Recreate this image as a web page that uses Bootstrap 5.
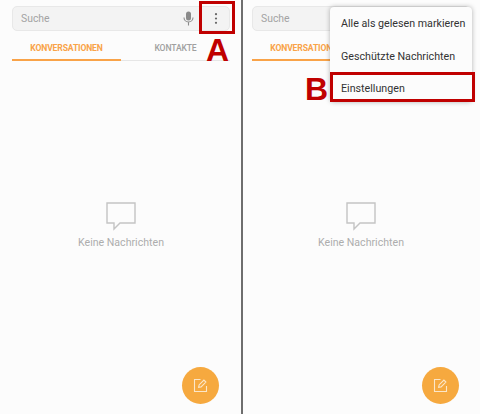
<!DOCTYPE html>
<html lang="de">
<head>
  <meta charset="UTF-8" />
  <title>Nachrichten</title>
  <link href="https://cdn.jsdelivr.net/npm/bootstrap@5.3.3/dist/css/bootstrap.min.css" rel="stylesheet">
  <style>
    html, body { width: 480px; height: 414px; overflow: hidden; }
    body { background: #fcfcfc; font-family: Roboto, "Liberation Sans", sans-serif; }
    .screen { width: 241px; height: 414px; padding: 6px 0 0 12px; position: relative; }
    .screen-b { width: 237px; padding-left: 9px; }
    .split { width: 2px; height: 414px; background: #6e6e6e; }
    .searchbar { width: 218px; height: 25px; background: #f3f3f3; border: 1px solid #e8e8e8; border-radius: 5px; padding: 0 11px 0 8px; color: #a3a3a3; font-size: 10.4px; }
    .mic-gap { gap: 20px; }
    .tabbar { width: 218px; height: 24px; margin-top: 6px; border-bottom: 1px solid #e6e6e6; font-size: 8.6px; font-weight: 700; }
    .tab-on { width: 109px; height: 24px; color: #f9a348; border-bottom: 2px solid #f9a348; text-align: center; line-height: 22px; letter-spacing: -.15px; }
    .tab-off { width: 109px; color: #a0a0a0; text-align: center; line-height: 22px; font-weight: 500; letter-spacing: -.15px; }
    .empty { margin-top: 141px; width: 218px; color: #adadad; font-size: 10.6px; }
    .empty svg { display: block; margin-bottom: 4px; }
    .fab { position: absolute; left: 182px; top: 367px; width: 37px; height: 37px; border-radius: 50%; background: #f6a93f; }
    .screen-b .fab { left: 179px; }
    .popmenu { position: absolute; left: 87px; top: 7px; width: 142px; height: 95px; padding-top: 1px; background: #fcfcfc; border-radius: 4px; box-shadow: 0 0 5px rgba(0,0,0,.3); color: #333; font-size: 10.7px; }
    .popmenu div { height: 32.5px; line-height: 32.5px; padding-left: 11px; white-space: nowrap; }
    .redbox { position: absolute; border: 3px solid #c00000; }
    .box-a { left: 199px; top: 1px; width: 36px; height: 33px; }
    .box-b { left: 87px; top: 72px; width: 145px; height: 30px; }
    .callout { position: absolute; color: #c00000; font-family: "Liberation Sans", sans-serif; font-weight: 700; font-size: 32px; line-height: 1; }
    .call-a { left: 206px; top: 34px; }
    .call-b { left: 62px; top: 73px; }
  </style>
</head>
<body class="d-flex">
  <div class="screen">
    <div class="searchbar d-flex align-items-center justify-content-between">
      <span>Suche</span>
      <span class="d-flex align-items-center mic-gap">
        <svg width="11" height="15" viewBox="0 0 11 15"><rect x="3" y="0.5" width="5" height="9" rx="2.5" fill="#8a8a8a"/><path d="M1 6.5a4.5 4.5 0 0 0 9 0M5.5 11v3.5" fill="none" stroke="#8a8a8a" stroke-width="1.1"/></svg>
        <svg width="4" height="11" viewBox="0 0 4 11"><circle cx="2" cy="1.2" r="1.1" fill="#666"/><circle cx="2" cy="5.5" r="1.1" fill="#666"/><circle cx="2" cy="9.8" r="1.1" fill="#666"/></svg>
      </span>
    </div>
    <div class="tabbar d-flex">
      <div class="tab-on">KONVERSATIONEN</div>
      <div class="tab-off">KONTAKTE</div>
    </div>
    <div class="empty d-flex flex-column align-items-center">
      <svg width="30" height="29" viewBox="0 0 30 29"><path d="M1 1h28v20H14l-6 6v-6H1z" fill="none" stroke="#c4c4c4" stroke-width="1.4"/></svg>
      <span>Keine Nachrichten</span>
    </div>
    <div class="fab d-flex align-items-center justify-content-center">
      <svg width="15" height="15" viewBox="0 0 15 15"><path d="M7.5 1.5h-6v12h12V8" fill="none" stroke="#fbe6c8" stroke-width="1.1"/><path d="M5.6 9.4l.5-2.5 4.8-4.8 2 2-4.8 4.8z" fill="none" stroke="#fbe6c8" stroke-width="1.1"/></svg>
    </div>
    <div class="redbox box-a"></div>
    <div class="callout call-a">A</div>
  </div>
  <div class="split"></div>
  <div class="screen screen-b">
    <div class="searchbar d-flex align-items-center"><span>Suche</span></div>
    <div class="tabbar d-flex">
      <div class="tab-on">KONVERSATIONEN</div>
    </div>
    <div class="empty d-flex flex-column align-items-center">
      <svg width="30" height="29" viewBox="0 0 30 29"><path d="M1 1h28v20H14l-6 6v-6H1z" fill="none" stroke="#c4c4c4" stroke-width="1.4"/></svg>
      <span>Keine Nachrichten</span>
    </div>
    <div class="fab d-flex align-items-center justify-content-center">
      <svg width="15" height="15" viewBox="0 0 15 15"><path d="M7.5 1.5h-6v12h12V8" fill="none" stroke="#fbe6c8" stroke-width="1.1"/><path d="M5.6 9.4l.5-2.5 4.8-4.8 2 2-4.8 4.8z" fill="none" stroke="#fbe6c8" stroke-width="1.1"/></svg>
    </div>
    <div class="popmenu">
      <div>Alle als gelesen markieren</div>
      <div>Geschützte Nachrichten</div>
      <div>Einstellungen</div>
    </div>
    <div class="redbox box-b"></div>
    <div class="callout call-b">B</div>
  </div>
  <script src="https://cdn.jsdelivr.net/npm/bootstrap@5.3.3/dist/js/bootstrap.bundle.min.js"></script>
</body>
</html>
